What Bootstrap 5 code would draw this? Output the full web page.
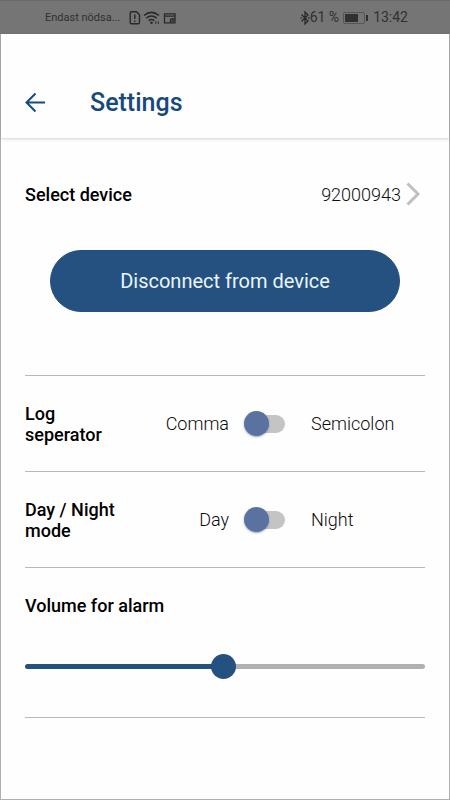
<!DOCTYPE html>
<html lang="en">
<head>
<meta charset="utf-8">
<meta name="viewport" content="width=device-width, initial-scale=1">
<title>Settings</title>
<link href="https://cdn.jsdelivr.net/npm/bootstrap@5.3.0/dist/css/bootstrap.min.css" rel="stylesheet">
<style>
  :root { --navy: #24517f; --ink: #0b0b0b; --line: #b9b9b9; }
  body { font-family: Roboto, "Liberation Sans", sans-serif; font-size: 18px; font-weight: 300; line-height: 21px; color: var(--ink); background: #fefefe; }
  .app-frame { border: 1px solid #b0b0b0; border-top: 0; }
  .status-strip { height: 34px; margin: 0 -1px; padding: 0 42px 0 45px; background: #757575; border-top: 1px solid #6a6a6a; color: #303030; font-size: 14px; font-weight: 400; }
  .carrier { font-size: 11px; }
  .app-header { height: 104px; padding: 50px 24px 0; box-shadow: 0 1px 3px rgba(0, 0, 0, .18); }
  .back-link { width: 65px; color: #174a7c; }
  .app-title { font-size: 25px; line-height: 30px; font-weight: 500; color: #174a7c; }
  .settings-main { padding: 44px 24px 0; }
  .row-title { font-size: 18px; line-height: 21px; font-weight: 500; color: #000; }
  .device-row { padding-bottom: 44px; }
  .device-link { color: #111; }
  .disconnect-btn { --bs-btn-color: #eaf4fc; --bs-btn-bg: var(--navy); --bs-btn-border-color: var(--navy); --bs-btn-hover-color: #fff; --bs-btn-hover-bg: #1c436b; height: 62px; font-size: 20px; }
  .disconnect-area { padding: 0 25px 63px; }
  .setting-row { border-top: 1px solid var(--line); height: 96px; }
  .setting-label { width: 28%; }
  .choice-start { width: 23%; }
  .toggle-input { appearance: none; display: grid; align-items: center; width: 41px; height: 25px; margin: 0 26px 0 15px; cursor: pointer; }
  .toggle-input::before { content: ""; grid-area: 1 / 1; justify-self: end; width: 38px; height: 18px; border-radius: 9px; background: #c4c4c4; }
  .toggle-input::after { content: ""; grid-area: 1 / 1; justify-self: start; width: 25px; height: 25px; border-radius: 50%; background: #5a72a0; box-shadow: 0 1px 2px rgba(60, 80, 120, .5); }
  .toggle-input:checked::after { justify-self: end; }
  .volume-row { border-top: 1px solid var(--line); border-bottom: 1px solid var(--line); padding: 27px 0 38px; }
  .volume-range { height: 26px; margin-top: 37px; }
  .volume-range::-webkit-slider-runnable-track { height: 5px; border-radius: 3px; background: linear-gradient(to right, #24517f 50%, #b1b1b1 50%); }
  .volume-range::-webkit-slider-thumb { width: 25px; height: 25px; margin-top: -10px; background: #24517f; }
</style>
<script src="https://cdn.jsdelivr.net/npm/bootstrap@5.3.0/dist/js/bootstrap.bundle.min.js"></script>
</head>
<body>
<div class="app-frame min-vh-100">
  <div class="status-strip d-flex align-items-center">
    <span class="carrier me-2">Endast nödsa...</span>
    <svg width="50" height="16" viewBox="0 0 50 16" fill="none" stroke="#292929" aria-hidden="true">
      <path d="M3.500 1.700h5l3 3v7.800q0 1.300-1.300 1.300H3.500q-1.300 0-1.300-1.300V3q0-1.300 1.300-1.300zM6.800 4.500v4.500M6.800 10.500v1.500" stroke-width="1.400"/>
      <path d="M16 5.500q7.500-6.300 15 0M18.300 8.200q5.200-4.200 10.400 0M20.700 10.700q2.800-2.200 5.600 0" stroke-width="1.500"/>
      <circle cx="23.500" cy="12.800" r="1.300" fill="#292929" stroke="none"/>
      <path d="M27.800 13.800v-2.500M30.300 11.300v2.500" stroke-width="1"/>
      <path d="M36.500 3.800h10.500v9H36.500zM36 6.200h11.500M42.500 9H47M42.500 9v4" stroke-width="1.300"/>
      <path d="M43.500 11h2.500" stroke-width="1.500"/>
    </svg>
    <div class="ms-auto d-flex align-items-center">
      <svg width="10" height="16" viewBox="0 0 10 16" fill="none" stroke="#292929" stroke-width="1.300" aria-hidden="true"><path d="M1.500 4.500l6.500 6.500-3 3V2l3 3-6.500 6.500M.5 8h1.300M8 8h1.500"/></svg>
      <span>61 %</span>
      <svg class="mx-1" width="26" height="12" viewBox="0 0 26 12" aria-hidden="true"><rect x=".5" y=".5" width="21" height="11" rx="1.500" fill="none" stroke="#555"/><rect x="2" y="2" width="13" height="8" fill="#303030"/><path d="M24 3v6" stroke="#303030" stroke-width="2"/></svg>
      <span>13:42</span>
    </div>
  </div>

  <header class="app-header d-flex align-items-start">
    <a class="back-link pt-1" href="#" aria-label="Back">
      <svg class="d-block mt-1" width="21" height="21" viewBox="0 0 21 21" fill="none" stroke="currentColor" stroke-width="2" aria-hidden="true"><path d="M20 10.500H2M10.500 1.500l-9 9 9 9"/></svg>
    </a>
    <h1 class="app-title mb-0 pt-1">Settings</h1>
  </header>

  <main class="settings-main">
    <section class="device-row d-flex align-items-center justify-content-between">
      <h2 class="row-title mb-0">Select device</h2>
      <a class="device-link d-flex align-items-center text-decoration-none" href="#">92000943
        <svg class="ms-1 me-1" width="16" height="24" viewBox="0 0 16 24" fill="none" stroke="#c0c0c0" stroke-width="3" aria-hidden="true"><path d="M2.500 1.500L13 12 2.500 22.500"/></svg>
      </a>
    </section>
    <div class="disconnect-area">
      <button type="button" class="btn btn-primary disconnect-btn rounded-pill w-100">Disconnect from device</button>
    </div>

    <section class="setting-row d-flex align-items-center">
      <h2 class="row-title setting-label mb-0" id="log-title">Log<br>seperator</h2>
      <span class="choice-start text-end">Comma</span>
      <input class="toggle-input flex-shrink-0" type="checkbox" role="switch" id="log-switch" aria-labelledby="log-title">
      <label for="log-switch">Semicolon</label>
    </section>
    <section class="setting-row d-flex align-items-center">
      <h2 class="row-title setting-label mb-0" id="mode-title">Day / Night<br>mode</h2>
      <span class="choice-start text-end">Day</span>
      <input class="toggle-input flex-shrink-0" type="checkbox" role="switch" id="mode-switch" aria-labelledby="mode-title">
      <label for="mode-switch">Night</label>
    </section>
    <section class="volume-row">
      <label class="row-title d-block" for="volume">Volume for alarm</label>
      <input class="form-range volume-range d-block" type="range" id="volume" min="0" max="200" value="99">
    </section>
  </main>
</div>
</body>
</html>
